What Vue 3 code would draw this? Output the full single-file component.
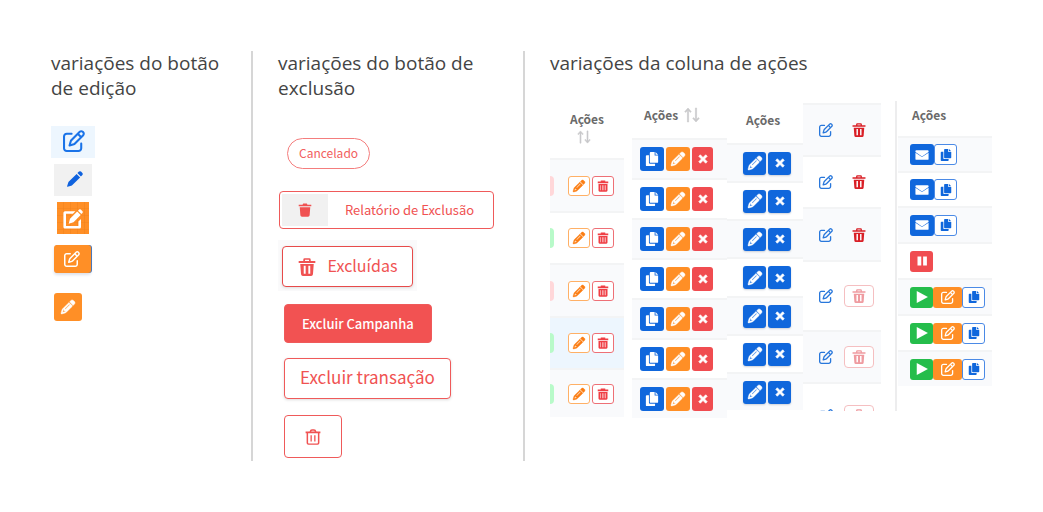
<script setup>
import { h } from 'vue'

const shapes = {
  edit: {
    box: '0 0 512 512',
    d: 'M441 58.9L453.1 71c9.4 9.4 9.4 24.6 0 33.9L424 134.1 377.9 88 407 58.9c9.4-9.4 24.6-9.4 33.9 0zM209.8 256.2L344 121.9 390.1 168 255.8 302.2c-2.9 2.9-6.5 5-10.4 6.1l-58.5 16.7 16.7-58.5c1.1-3.9 3.2-7.5 6.1-10.4zM373.1 25L175.8 222.2c-8.7 8.7-15 19.4-18.3 31.1l-28.6 100c-2.4 8.4-.1 17.4 6.1 23.6s15.2 8.5 23.6 6.1l100-28.6c11.8-3.4 22.5-9.7 31.1-18.3L487 138.9c28.1-28.1 28.1-73.7 0-101.8L474.9 25C446.8-3.1 401.2-3.1 373.1 25zM88 64C39.4 64 0 103.4 0 152V424c0 48.6 39.4 88 88 88H360c48.6 0 88-39.4 88-88V312c0-13.3-10.7-24-24-24s-24 10.7-24 24V424c0 22.1-17.9 40-40 40H88c-22.1 0-40-17.9-40-40V152c0-22.1 17.9-40 40-40H200c13.3 0 24-10.7 24-24s-10.7-24-24-24H88z'
  },
  pencil: {
    box: '0 0 512 512',
    line: 16,
    d: 'M410.3 231l11.3-11.3-33.9-33.9-62.1-62.1L291.7 89.8l-11.3 11.3-22.6 22.6L58.6 322.9c-10.4 10.4-18 23.3-22.2 37.4L1 480.7c-2.5 8.4-.2 17.5 6.1 23.7s15.3 8.5 23.7 6.1l120.3-35.4c14.1-4.2 27-11.8 37.4-22.2L387.7 253.7 410.3 231zM160 399.4l-9.1 22.7c-4 3.1-8.5 5.4-13.3 6.9L59.4 452l23-78.1c1.4-4.9 3.8-9.4 6.9-13.3l22.7-9.1v32c0 8.8 7.2 16 16 16h32zM362.7 18.7L348.3 33.2 325.7 55.8 314.3 67.1l33.9 33.9 62.1 62.1 33.9 33.9 11.3-11.3 22.6-22.6 14.5-14.5c25-25 25-65.5 0-90.5L453.3 18.7c-25-25-65.5-25-90.5 0zm-47.4 168l-144 144c-6.2 6.2-16.4 6.2-22.6 0s-6.2-16.4 0-22.6l144-144c6.2-6.2 16.4-6.2 22.6 0s6.2 16.4 0 22.6z'
  },
  pen: {
    box: '0 0 16 16',
    d: 'M9.6 2.9l3.5 3.5-7.7 7.7q-.5.5-1.2.7L.5 15.8q-.5 0-.4-.5L1.2 11.8q.2-.7.7-1.2zM10.4 2.1L12 .6q1-.9 2 0l1.4 1.4q.9 1 0 2L13.9 5.6z'
  },
  penSquare: {
    box: '0 0 20 20',
    d: 'M2 2.2h10.4L9.9 4.8H3V17h12.4v-4.5l2.6-2.6V18q0 1.6-1.6 1.6H2Q.4 19.600 .4 18V3.800Q.4 2.200 2 2.200zM14.200 2.600l3.500 3.500-7.200 7.200-4.800 1.400 1.300-4.900zM15 1.800l1.200-1.200q.8-.7 1.600 0l1.700 1.700q.7.8 0 1.600l-1.100 1.200z'
  },
  trash: {
    box: '0 0 16 16',
    d: 'M.6 2.700h14.800v1.700H.6zM4.700 2.700V1.500Q4.700.2 6 .2h4q1.300 0 1.300 1.300v1.200H9.800V1.600H6.200v1.100zM2 5.300h12l-.7 9.200q-.2 1.500-1.600 1.500H4.300q-1.400 0-1.600-1.500zM5.100 6.800v7.200h1.700V6.800zM9.200 6.800v7.200h1.700V6.800z'
  },
  trashSolid: {
    box: '0 0 16 16',
    d: 'M.8 2h4.400l.7-1.300h4.200l.7 1.300h4.400v1.700H.8zM2 4.900h12L13.300 14q-.2 1.700-1.800 1.700h-7Q2.900 15.700 2.700 14z'
  },
  trashLined: {
    box: '0 0 16 16',
    d: 'M1 2h4V.5h6V2h4v2.200H1zM2 5.200h12V14q0 1.500-1.500 1.500h-9Q2 15.500 2 14zM4.500 7v6.500h.7V7zM6.700 7v6.500h.7V7zM8.900 7v6.500h.7V7zM11.100 7v6.500h.7V7z'
  },
  trashOutline: {
    box: '0 0 16 16',
    d: 'M.6 2.600h4Q5 .3 7 .3h2q2 0 2.400 2.300h4v1.600h-1V14q0 1.800-1.800 1.800H3.400Q1.600 15.800 1.600 14V4.200h-1zM6.200 2.600h3.600Q9.600 1.700 8.900 1.700H7.100Q6.400 1.700 6.200 2.600zM3.100 4.200V13.800q0 .6.600.6h8.600q.6 0 .6-.6V4.200zM5.500 6.200h1.300v6.200H5.500zM9.200 6.200h1.300v6.200H9.200z'
  },
  copy: {
    box: '0 0 16 16',
    d: 'M6.500 0H11v4h4v7.300q0 1-1 1H6.500q-1 0-1-1V1q0-1 1-1zM12 0l3 3h-3zM2 3.600h2.500v8.600q0 1.200 1.200 1.200h5.800V15q0 1-1 1H2q-1 0-1-1V4.600q0-1 1-1z'
  },
  close: {
    box: '0 0 16 16',
    line: 1,
    d: 'M3.700 1.200L8 5.500l4.300-4.300 2.500 2.500L10.500 8l4.300 4.300-2.500 2.500L8 10.500l-4.300 4.300-2.500-2.500L5.500 8 1.200 3.700z'
  },
  mail: {
    box: '0 0 16 16',
    d: 'M1.500 2.500h13q1 0 1 1v1.200L8 9.600.5 4.700V3.500q0-1 1-1zM.5 5.500L8 10.400l7.500-4.900v7q0 1-1 1h-13q-1 0-1-1z'
  },
  pause: { box: '0 0 16 16', d: 'M2 2h5v12H2zM9.500 2h5v12h-5z' },
  play: { box: '0 0 16 16', d: 'M2 1.200L14.800 8 2 14.800z' },
  sort: {
    box: '0 0 16 16',
    line: 0.6,
    d: 'M4 1L.8 4.600l.8.800 1.800-2V15h1.200V3.400l1.800 2 .8-.8zM12 15l3.200-3.600-.8-.8-1.800 2V1h-1.200v11.600l-1.800-2-.8.800z'
  }
}

const Icon = (props) => {
  const { box, d, line } = shapes[props.name]
  return h('svg', { viewBox: box, 'aria-hidden': 'true', class: 'icon' }, [
    h('path', {
      d,
      fill: 'currentColor',
      'fill-rule': 'evenodd',
      stroke: line ? 'currentColor' : 'none',
      'stroke-width': line || 0
    })
  ])
}
Icon.props = ['name']

const statusRows = ['pink', 'green', 'pink', 'green', 'green']
const plainRows = [false, false, false, true, true, true]
const campaignRows = ['sent', 'sent', 'sent', 'paused', 'ready', 'ready', 'ready']
</script>

<template>
  <main class="board">
    <section class="col">
      <h2>variações do botão<br>de edição</h2>
      <div class="edits">
        <button class="edit-btn pale" aria-label="Editar"><Icon name="edit" class="s22" /></button>
        <button class="edit-btn gray" aria-label="Editar"><Icon name="pen" class="s16" /></button>
        <button class="edit-btn grid" aria-label="Editar"><Icon name="penSquare" class="s20" /></button>
        <button class="edit-btn wide" aria-label="Editar"><Icon name="edit" class="s16" /></button>
        <button class="edit-btn small" aria-label="Editar"><Icon name="pencil" class="s14" /></button>
      </div>
    </section>

    <section class="col second">
      <h2>variações do botão de<br>exclusão</h2>
      <div class="deletes">
        <button class="del pill">Cancelado</button>
        <button class="del report">
          <span class="report-icon"><Icon name="trashSolid" class="s14" /></span>
          <span class="report-text">Relatório de Exclusão</span>
        </button>
        <div class="tint">
          <button class="del large raised"><Icon name="trash" class="s18" /><span class="label">Excluídas</span></button>
        </div>
        <button class="del solid">Excluir Campanha</button>
        <button class="del large transaction"><span class="label">Excluir transação</span></button>
        <button class="del only" aria-label="Excluir"><Icon name="trashOutline" class="s16" /></button>
      </div>
    </section>

    <section class="col third">
      <h2>variações da coluna de ações</h2>
      <div class="tables">
        <div class="t-status">
          <table>
            <thead><tr><th colspan="2">Ações<Icon name="sort" class="s14 below" /></th></tr></thead>
            <tbody>
              <tr v-for="(tone, i) in statusRows" :key="i">
                <td class="tag-cell"><div class="tag" :class="tone"></div></td>
                <td>
                  <div class="acts">
                    <button class="b outline orange" aria-label="Editar"><Icon name="pencil" class="s12" /></button>
                    <button class="b outline red" aria-label="Excluir"><Icon name="trashLined" class="s12" /></button>
                  </div>
                </td>
              </tr>
            </tbody>
          </table>
        </div>

        <div class="t-three">
          <table>
            <thead><tr><th><span class="sorted">Ações<Icon name="sort" class="s16" /></span></th></tr></thead>
            <tbody>
              <tr v-for="n in 7" :key="n">
                <td>
                  <div class="acts">
                    <button class="b blue" aria-label="Copiar"><Icon name="copy" class="s14" /></button>
                    <button class="b amber" aria-label="Editar"><Icon name="pencil" class="s14" /></button>
                    <button class="b crimson" aria-label="Remover"><Icon name="close" class="s10" /></button>
                  </div>
                </td>
              </tr>
            </tbody>
          </table>
        </div>

        <div class="t-two">
          <table>
            <thead><tr><th>Ações</th></tr></thead>
            <tbody>
              <tr v-for="n in 7" :key="n">
                <td>
                  <div class="acts">
                    <button class="b blue" aria-label="Editar"><Icon name="pencil" class="s14" /></button>
                    <button class="b blue" aria-label="Remover"><Icon name="close" class="s10" /></button>
                  </div>
                </td>
              </tr>
            </tbody>
          </table>
        </div>

        <div class="t-plain">
          <table>
            <tbody>
              <tr v-for="(off, i) in plainRows" :key="i">
                <td>
                  <div class="acts">
                    <button class="bare" aria-label="Editar"><Icon name="edit" class="s14" /></button>
                    <button class="bin" :disabled="off" aria-label="Excluir"><Icon name="trash" class="s14" /></button>
                  </div>
                </td>
              </tr>
            </tbody>
          </table>
        </div>

        <div class="t-campaign">
          <table>
            <thead><tr><th>Ações</th></tr></thead>
            <tbody>
              <tr v-for="(kind, i) in campaignRows" :key="i">
                <td>
                  <div class="acts">
                    <template v-if="kind === 'sent'">
                      <button class="b blue mail" aria-label="Enviar"><Icon name="mail" class="s14" /></button>
                      <button class="b outline azure" aria-label="Copiar"><Icon name="copy" class="s12" /></button>
                    </template>
                    <button v-else-if="kind === 'paused'" class="b crimson" aria-label="Pausar"><Icon name="pause" class="s12" /></button>
                    <template v-else>
                      <button class="b go" aria-label="Iniciar"><Icon name="play" class="s14" /></button>
                      <button class="b amber modify" aria-label="Editar"><Icon name="edit" class="s14" /></button>
                      <button class="b outline azure" aria-label="Copiar"><Icon name="copy" class="s12" /></button>
                    </template>
                  </div>
                </td>
              </tr>
            </tbody>
          </table>
        </div>
      </div>
    </section>
  </main>
</template>

<style>
body { margin: 0; background: #fff; }
</style>

<style scoped>
.board {
  display: grid;
  grid-template-columns: 202fr 272fr 467fr;
  padding: 51px;
  font-family: "Noto Sans CJK SC", "Noto Sans", sans-serif;
}
.col { box-sizing: border-box; border-right: 2px solid #d6d6d6; min-width: 0; }
.second { padding-left: 25px; padding-bottom: 3px; }
.third { padding-left: 25px; border-right: 0; }
h2 {
  margin: 0;
  font: 400 19px/25px "Open Sans", "Noto Sans", sans-serif;
  color: #444;
  white-space: nowrap;
}
button {
  box-sizing: border-box;
  display: flex;
  align-items: center;
  justify-content: center;
  margin: 0;
  padding: 0;
  border: 0;
  background: none;
  font-family: inherit;
  white-space: nowrap;
  cursor: pointer;
}
.icon { display: block; flex: none; overflow: visible; }
.s10 { width: 10px; height: 10px; }
.s12 { width: 12px; height: 12px; }
.s14 { width: 14px; height: 14px; }
.s16 { width: 16px; height: 16px; }
.s18 { width: 18px; height: 18px; }
.s20 { width: 20px; height: 20px; }
.s22 { width: 22px; height: 22px; }

.edits { display: flex; flex-direction: column; align-items: flex-start; gap: 6px; margin-top: 25px; }
.edit-btn { height: 32px; margin-left: 3px; background: #ff8f26; color: #fff; }
.pale { width: 44px; margin-left: 0; padding: 0 0 2px 2px; background: #edf6fe; color: #1a73e8; }
.gray { width: 38px; padding: 0 0 2px 4px; background: #f1f1f1; color: #0f62de; }
.grid {
  width: 32px;
  margin-left: 6px;
  padding-top: 2px;
  background: repeating-linear-gradient(90deg, transparent 0 6px, rgb(236 126 24 / 40%) 6px 7px),
    repeating-linear-gradient(#ff8f26 0 6px, #f98a23 6px 7px);
}
.wide {
  width: 37px;
  height: 28px;
  margin-top: 5px;
  padding-right: 2px;
  border-radius: 3px;
  box-shadow: 1px 0 0 #4c78b8, 0 2px 3px #dde1ea;
}
.small { width: 28px; height: 28px; margin-top: 14px; border-radius: 3px; }

.deletes { display: flex; flex-direction: column; align-items: flex-start; margin-top: 37px; }
.del {
  margin-left: 6px;
  border: 1px solid #ef5a5a;
  border-radius: 4px;
  background: #fff;
  color: #f05252;
  font-size: 13px;
  line-height: 20px;
}
.pill {
  height: 31px;
  margin-left: 9px;
  padding: 0 11px 2px;
  border-color: #f47d7d;
  border-radius: 16px;
  font-size: 12px;
  color: #f26060;
}
.report { justify-content: flex-start; width: 215px; height: 38px; margin: 22px 0 0 1px; padding: 2px; }
.report-icon { display: flex; align-items: center; justify-content: center; width: 46px; height: 32px; background: #f1f1f1; }
.report-text { flex: 1; }
.tint { margin-top: 11px; padding: 6px 4px 4px; background: #fafafb; }
.large { height: 41px; font-size: 17px; box-shadow: 0 1px 3px #ddd; }
.label { padding-bottom: 3px; }
.raised { gap: 12px; width: 131px; margin-left: 0; border-color: #e74a4a; font-size: 16px; }
.solid { height: 39px; margin-top: 13px; padding: 0 17px; background: #f25252; color: #fff; font-weight: 500; }
.transaction { margin-top: 15px; padding: 0 15px; }
.only { width: 58px; height: 43px; margin-top: 16px; }

.tables {
  display: grid;
  grid-template-columns: 82fr 95fr 76fr 92fr 97fr;
  align-items: start;
  margin-top: 25px;
}
table { width: 100%; border-collapse: separate; border-spacing: 0; }
th, td { box-sizing: border-box; padding: 0; }
th { color: #6a6a6a; font-size: 12px; font-weight: 700; line-height: 18px; text-align: left; }
td { border-top: 2px solid #f3f4f5; }
tbody tr:nth-child(odd) td { background: #f9fafc; }
.acts { display: flex; align-items: center; gap: 2px; }
th .icon { color: #c9c9cb; }

.b { width: 22px; height: 20px; border-radius: 3px; color: #fff; }
.blue { background: #1067dc; }
.amber { background: #ff8f26; }
.crimson { background: #f04c50; }
.go { background: #25bd4b; }
.outline { border: 1px solid; background: #fff; }
.orange { border-color: #ffb066; color: #fb7d14; }
.red { border-color: #ee7076; color: #ef3f45; }
.azure { border-color: #4b8ae6; color: #1067dc; }

.t-status { padding-right: 8px; }
.t-status th { height: 57px; padding-bottom: 5px; text-align: center; }
.below { margin: 2px auto 0 27px; }
.t-status td { height: 52px; }
.t-status tr:nth-child(odd) td { height: 53px; }
.t-status tr:nth-child(4) td { background: #edf6fe; }
.t-status tr:last-child td { height: 49px; }
.tag-cell { width: 18px; }
.tag { width: 4px; height: 20px; border-radius: 0 5px 5px 0; }
.pink { background: #ffd7d9; }
.green { background: #b8fac9; }

.t-three th { height: 37px; padding: 0 0 10px 12px; }
.sorted { display: flex; align-items: center; gap: 6px; }
.t-three td { height: 40px; padding-left: 8px; }
.t-three .b { width: 24px; height: 24px; }
.t-three .crimson { width: 21px; }

.t-two th { height: 42px; padding: 0 0 4px 19px; }
.t-two td { height: 38px; padding-left: 16px; }
.t-two tr:nth-child(4) td { height: 39px; }
.t-two .b { width: 23px; height: 23px; box-shadow: 0 1px 2px #ccd0d8; }

.t-plain { height: 308px; margin-top: 2px; padding-right: 14px; overflow: hidden; }
.t-plain td { height: 52px; padding-left: 16px; }
.t-plain tr:nth-child(3) td { height: 53px; }
.t-plain tr:nth-child(4) td { height: 70px; }
.t-plain tr:nth-child(6) td { height: 66px; }
.bare { color: #2877db; }
.t-plain .acts { gap: 11px; }
.bin { width: 30px; height: 22px; border-radius: 4px; color: #d91f26; }
.bin:disabled { border: 1px solid #f5bfc1; background: #fff; color: #ef9ba0; }

.t-campaign { box-sizing: border-box; height: 310px; padding-left: 1px; border-left: 2px solid #ededee; }
.t-campaign th { height: 35px; padding: 0 0 8px 14px; }
.t-campaign td { height: 36px; padding-left: 12px; }
.t-campaign tr:nth-child(-n+2) td { height: 35px; }
.t-campaign .acts { gap: 0; }
.t-campaign .b { width: 23px; height: 21px; }
.t-campaign .mail { width: 24px; }
.t-campaign .modify { width: 29px; }
</style>
